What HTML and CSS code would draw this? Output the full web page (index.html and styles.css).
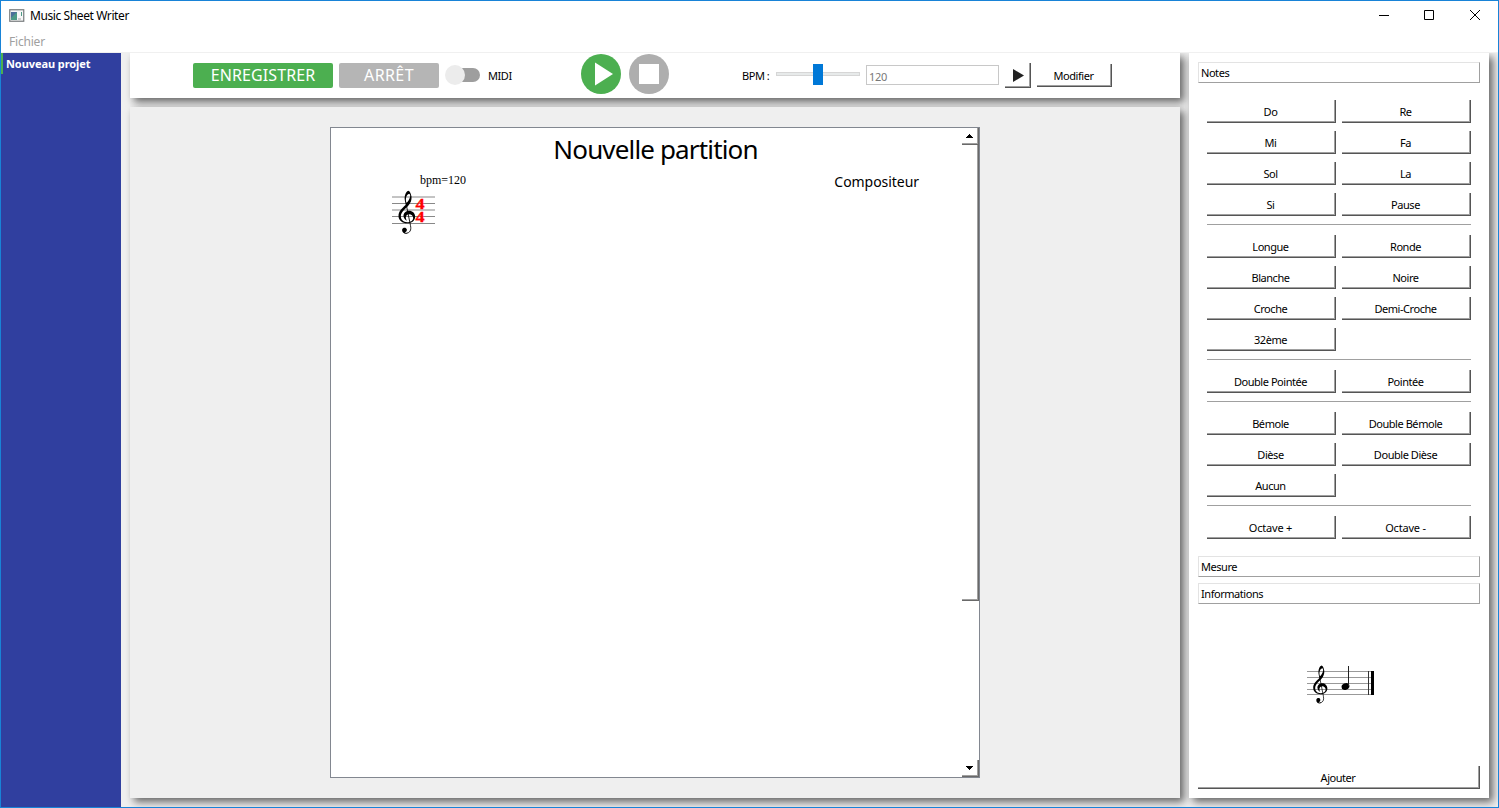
FILE: index.html
```html
<!DOCTYPE html>
<html lang="fr">
<head>
<meta charset="utf-8">
<title>Music Sheet Writer</title>
<link rel="stylesheet" href="styles.css">
</head>
<body>
<svg class="defs" width="0" height="0">
  <symbol id="clef" viewBox="0 0 60 135" preserveAspectRatio="none">
    <path d="M35 2C28 5 23 17 25 31C26 37 27 41 28 45C16 56 6 65 6 79C6 93 18 101 32 101C46 101 56 92 56 81C56 70 47 63 38 63C27 63 20 71 21 80C22 87 26 91 31 93C27 87 27 80 31 76C38 70 50 75 50 85C50 93 42 98 32 98C21 98 13 91 13 80C13 68 23 60 34 49C43 40 46 30 45 20C44 12 40 2 35 2ZM38 11C42 12 42 20 39 26C37 31 34 36 30 39C26 28 29 13 38 11Z"/>
    <path d="M29 43L42 108C45 122 40 130 30 131" fill="none" stroke="#000" stroke-width="2.600"/>
    <path d="M30 133C21 133 16 127 17 120C18 113 29 112 31 119C32 125 28 128 25 128C27 131 31 130 34 130Z"/>
  </symbol>
</svg>
<div class="window">
  <header class="titlebar">
    <svg class="app-icon" width="16" height="13" viewBox="0 0 16 13">
      <rect x=".75" y=".75" width="14" height="11.5" fill="#f7f7f7" stroke="#777b7d" stroke-width="1.2"/>
      <rect x="2" y="3" width="6" height="8" fill="#4d9a86"/><path d="M2 3h6L2 9z" fill="#4c7099"/>
      <rect x="9" y="9" width="3" height="2" fill="#ccc"/><rect x="12" y="3" width="1" height="4" fill="#4d9a86"/>
    </svg>
    <span class="app-name">Music Sheet Writer</span>
    <svg class="controls" width="102" height="12" viewBox="0 0 102 12" fill="none" stroke="#000">
      <path d="M0 6.500h10M45.500 1.500h9v9h-9zM91 1l10 10M101 1L91 11"/>
    </svg>
  </header>
  <nav class="menu">Fichier</nav>
  <div class="body">
    <aside class="projects"><div class="project">Nouveau projet</div></aside>
    <main class="center">
      <section class="toolbar">
        <button class="flat record">ENREGISTRER</button>
        <button class="flat stop">ARRÊT</button>
        <svg class="toggle" width="35" height="20"><rect x="5" y="3" width="30" height="14" rx="7" fill="#9e9e9e"/><circle cx="10" cy="10" r="10" fill="#ececec"/></svg>
        <span class="midi">MIDI</span>
        <svg class="play" width="40" height="40"><circle cx="20" cy="20" r="20" fill="#4caf50"/><path d="M14 8.500L32 20L14 31.500z" fill="#fff"/></svg>
        <svg class="halt" width="40" height="40"><circle cx="20" cy="20" r="20" fill="#aeaeae"/><path d="M10 10h20v20H10z" fill="#fff"/></svg>
        <span class="bpm">BPM :</span>
        <svg class="slider" width="84" height="22"><rect x=".5" y="8.500" width="83" height="3" fill="#e7eaea" stroke="#d6d6d6"/><path d="M37 0h10v21H37z" fill="#0078d7"/></svg>
        <div class="field">120</div>
        <button class="bevel arrow"><svg width="11" height="13"><path d="M0 0v13l11-6.500z" fill="#222"/></svg></button>
        <button class="bevel modify">Modifier</button>
      </section>
      <section class="workspace">
        <div class="sheet">
          <div class="page">
            <h1 class="title">Nouvelle partition</h1>
            <div class="composer">Compositeur</div>
            <svg class="score" width="80" height="66" viewBox="390 170 80 66">
              <text class="tempo" x="420" y="184" textLength="46">bpm=120</text>
              <path d="M392 197h43M392 203.500h43M392 210h43M392 216.500h43M392 223.500h43" stroke="#888"/>
              <use href="#clef" x="396.500" y="190" width="20" height="44.500"/>
              <text class="meter" transform="translate(415.500 209) scale(1.300 1)">4</text>
              <text class="meter" transform="translate(415.500 222) scale(1.300 1)">4</text>
            </svg>
          </div>
          <div class="scroll">
            <div class="scroll-btn up"><svg width="7" height="4"><path d="M3 0h1v1h1v1h1v1h1v1H0V3h1V2h1V1h1z"/></svg></div>
            <div class="thumb"></div>
            <div class="track"></div>
            <div class="scroll-btn down"><svg width="7" height="4"><path d="M3 4h1V3h1V2h1V1h1V0H0v1h1v1h1v1h1z"/></svg></div>
          </div>
        </div>
      </section>
    </main>
    <aside class="panel">
      <div class="head">Notes</div>
      <div class="groups">
        <div class="grid">
          <button class="bevel">Do</button><button class="bevel">Re</button>
          <button class="bevel">Mi</button><button class="bevel">Fa</button>
          <button class="bevel">Sol</button><button class="bevel">La</button>
          <button class="bevel">Si</button><button class="bevel">Pause</button>
        </div>
        <div class="grid">
          <button class="bevel">Longue</button><button class="bevel">Ronde</button>
          <button class="bevel">Blanche</button><button class="bevel">Noire</button>
          <button class="bevel">Croche</button><button class="bevel">Demi-Croche</button>
          <button class="bevel">32ème</button>
        </div>
        <div class="grid"><button class="bevel">Double Pointée</button><button class="bevel">Pointée</button></div>
        <div class="grid">
          <button class="bevel">Bémole</button><button class="bevel">Double Bémole</button>
          <button class="bevel">Dièse</button><button class="bevel">Double Dièse</button>
          <button class="bevel">Aucun</button>
        </div>
        <div class="grid octaves"><button class="bevel">Octave +</button><button class="bevel">Octave -</button></div>
      </div>
      <div class="head">Mesure</div>
      <div class="head">Informations</div>
      <div class="preview">
        <svg width="68" height="40" viewBox="1306 665 68 40">
          <path d="M1307 671.500h66M1307 677.500h66M1307 683.500h66M1307 689.500h66M1307 694.500h66" stroke="#999"/>
          <use href="#clef" x="1311.500" y="665" width="17" height="39"/>
          <ellipse cx="1345.500" cy="686.500" rx="4" ry="3.200" transform="rotate(-25 1345.500 686.500)"/>
          <path d="M1348.500 666v20" stroke="#222"/>
          <path d="M1368.500 671v24" stroke="#333"/><path d="M1371 671h3v24h-3z"/>
        </svg>
      </div>
      <button class="bevel add">Ajouter</button>
    </aside>
  </div>
</div>
</body>
</html>
```
FILE: styles.css
```css
* { box-sizing: border-box; }
body { margin: 0; font: 11px/13px "Noto Sans", sans-serif; color: #000; letter-spacing: -.45px; }
button { font: inherit; letter-spacing: inherit; color: inherit; border: 0; padding: 0; background: #fff; }
svg { display: block; flex: none; }
.defs { position: absolute; }
.window { width: 1499px; height: 808px; border: 1px solid #1883d7; background: #fff; display: flex; flex-direction: column; overflow: hidden; }
.titlebar { height: 29px; display: flex; align-items: center; padding: 0 17px 0 8px; font-size: 12px; letter-spacing: -.4px; }
.app-icon { margin-right: 5px; }
.app-name { flex: 1; }
.controls { margin-bottom: 2px; }
.menu { height: 23px; padding: 5px 8px 0; color: #a0a0a0; font-size: 12px; letter-spacing: -.2px; border-bottom: 1px solid #f0f0f0; }
.body { flex: 1; display: flex; background: #f0f0f0; min-height: 0; overflow: hidden; }
.projects { width: 120px; margin-right: 9px; background: #303f9f; }
.project { height: 21px; padding: 4px 0 0 3px; border-left: 2px solid #4caf50; color: #fff; font-weight: 700; letter-spacing: -.08px; }
.center { width: 1050px; display: flex; flex-direction: column; gap: 9px; margin-right: 9px; padding-bottom: 9px; }
.toolbar, .workspace, .panel { box-shadow: 4px 4px 8px rgba(0, 0, 0, .58); }
.toolbar { height: 45px; background: #fff; display: flex; align-items: center; padding-left: 63px; }
.flat { height: 25px; border-radius: 2px; color: #fff; font-size: 16px; letter-spacing: .1px; }
.record { width: 140px; background: #4caf50; margin-right: 6px; }
.stop { width: 100px; background: #b5b5b5; margin-right: 6px; letter-spacing: .4px; }
.toggle { margin: 0 8px 2px 0; }
.midi { width: 93px; }
.play { margin: 0 8px 3px 0; }
.halt { margin: 0 73px 3px 0; }
.bpm { width: 34px; }
.slider { margin: 0 6px 2px 0; }
.field { width: 133px; height: 20px; padding: 4px 2px; border: 1px solid #c8c8c8; color: #777; margin: 0 6px 2px 0; letter-spacing: -.3px; }
.bevel { height: 23px; border: solid #555; border-width: 0 1px 1px 0; box-shadow: inset -1px -1px #a0a0a0; text-align: center; padding-right: 1px; }
.arrow { width: 26px; height: 25px; margin-right: 6px; padding-left: 8px; }
.modify { width: 75px; }
.workspace { flex: 1; background: #efefef; padding: 20px 0 0 200px; }
.sheet { width: 650px; height: 651px; border: 1px solid #828790; background: #fff; display: flex; }
.page { flex: 1; display: flex; flex-direction: column; }
.title { margin: 5px 0 1px 18px; text-align: center; font: 26px/32px "Noto Sans", sans-serif; letter-spacing: -.85px; }
.composer { margin: 7px 43px 0 0; text-align: right; font-size: 14px; line-height: 18px; letter-spacing: -.05px; }
.score { margin: -21px 0 0 59px; }
.tempo { font: 12px "Liberation Serif", serif; letter-spacing: 0; }
.meter { font: bold 14px "Liberation Serif", serif; fill: #f00; stroke: #f00; stroke-width: .3px; }
.scroll { width: 17px; display: flex; flex-direction: column; }
.scroll-btn, .thumb { border: solid #696969; border-width: 0 1px 1px 0; box-shadow: inset -1px -1px #a0a0a0; }
.scroll-btn { height: 17px; display: flex; align-items: center; justify-content: center; padding-right: 1px; }
.thumb { height: 456px; }
.track { flex: 1; }
.panel { width: 300px; height: 745px; background: #fff; padding: 9px; display: flex; flex-direction: column; }
.head { height: 21px; border: 1px solid; border-color: #e3e3e3 #a0a0a0 #a0a0a0 #e3e3e3; padding: 3px 2px; margin-bottom: 6px; width: 282px; }
.groups { height: 467px; padding: 11px 9px 0; }
.grid { display: grid; grid-template-columns: 129px 129px; gap: 8px 6px; padding-bottom: 8px; }
.grid + .grid { border-top: 1px solid #a0a0a0; padding-top: 10px; }
.octaves { word-spacing: 2px; letter-spacing: -.2px; }
.preview { flex: 1; padding: 55px 0 0 108px; }
.add { width: 282px; }
```
